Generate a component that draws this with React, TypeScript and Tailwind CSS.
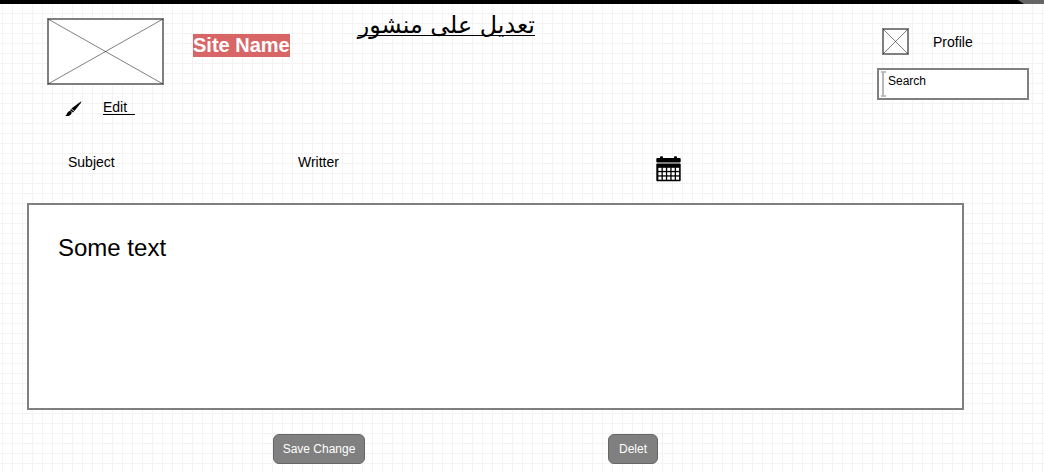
function CrossBox({ w, h }: { w: number; h: number }) {
  return (
    <svg width={w} height={h} viewBox={`0 0 ${w} ${h}`} className="block shrink-0">
      <rect x="1" y="1" width={w - 2} height={h - 2} fill="#fff" stroke="#808080" strokeWidth="2" />
      <path d={`M1 1L${w - 1} ${h - 1}M1 ${h - 1}L${w - 1} 1`} stroke="#000" strokeWidth="0.5" />
    </svg>
  );
}

function Brush() {
  return (
    <svg width="18" height="16" viewBox="0 0 18 16" className="block shrink-0">
      <path d="M16.4 0.3L15.6 2.2L9.4 10L6.4 7.6L13.8 1.9Z" />
      <path d="M6 8L9 10.4L8.1 11.5L5.1 9.4Z" />
      <path d="M4.4 10C6 9.9 7.4 11 6.4 12.7C5.4 14.3 3.2 15.4 0.2 14.9C2 14.1 2 10.7 4.4 10Z" />
    </svg>
  );
}

function Calendar() {
  const cols = [2.4, 6.8, 11.2, 15.6, 20];
  const rows = [11.8, 16.2, 20.6];
  return (
    <svg width="26" height="26" viewBox="0 0 26 26" className="block shrink-0">
      <rect x="4" y="0.3" width="3" height="4" rx="1" />
      <rect x="18" y="0.3" width="3" height="4" rx="1" />
      <rect x="0.3" y="2" width="24.4" height="4.4" rx="1" />
      <rect x="0.3" y="7.4" width="24.4" height="17.9" rx="1" />
      {rows.map((y) => cols.map((x) => <rect key={`${x}-${y}`} x={x} y={y} width="3.1" height="3.1" fill="#fff" />))}
    </svg>
  );
}

function Button({ children, className }: { children: string; className: string }) {
  return (
    <button className={`h-[30px] shrink-0 rounded-md border border-[#666] bg-[#808080] text-center text-xs text-white ${className}`}>
      {children}
    </button>
  );
}

export default function App() {
  return (
    <div className="h-[472px] w-[1044px] overflow-hidden bg-white bg-[linear-gradient(to_right,#f3f3f3_1px,transparent_1px),linear-gradient(to_bottom,#f3f3f3_1px,transparent_1px)] bg-[length:10px_10px] bg-[position:2px_3px] font-['Liberation_Sans',Arial,sans-serif] text-sm text-black">
      <div className="flex h-1 justify-end bg-black">
        <svg width="26" height="4" className="block">
          <path d="M0 0H26V4H6Z" fill="#666" />
        </svg>
      </div>
      <header className="flex h-[140px] items-start">
        <div className="ml-[47px] w-[117px] pt-[14px]">
          <CrossBox w={117} h={67} />
          <div className="mt-[12px] flex pl-[18px]">
            <div className="pt-[4px]"><Brush /></div>
            <span className="ml-[20px] whitespace-pre leading-5 underline underline-offset-2">{"Edit  "}</span>
          </div>
        </div>
        <h1 className="ml-[29px] mt-[30px] h-[23px] w-[97px] whitespace-nowrap bg-[#d96666] text-[20px] font-bold leading-[23px] text-white">Site Name</h1>
        <h2 dir="rtl" className="ml-[67px] mt-[4px] w-[178px] whitespace-nowrap font-['DejaVu_Sans',sans-serif] text-[23.8px] leading-[34px] underline decoration-1 underline-offset-2 [text-decoration-skip-ink:none]">تعديل على منشور</h2>
        <div className="ml-auto mr-[15px] w-[152px] pt-[24px]">
          <div className="flex items-center pl-[5px]">
            <CrossBox w={27} h={27} />
            <span className="ml-[24px]">Profile</span>
          </div>
          <div className="mt-[13px] flex h-8 border-2 border-[#808080] bg-white pl-[2px] text-xs">
            <svg width="5" height="26" viewBox="0 0 5 26" className="mt-[1px] block">
              <path d="M0 1H5M0 25H5" stroke="#aaa" strokeWidth="1.4" />
              <path d="M2 1V25" stroke="#b8b8b8" strokeWidth="2" />
            </svg>
            <span className="ml-[2px] mt-[3px] leading-4">Search</span>
          </div>
        </div>
      </header>
      <div className="flex h-[59px] items-start pl-[68px]">
        <span className="mt-[8px] w-[230px] leading-5">Subject</span>
        <span className="mt-[8px] w-[358px] leading-5">Writter</span>
        <div className="mt-[12px]"><Calendar /></div>
      </div>
      <main className="ml-[27px] h-[207px] w-[937px] border-2 border-[#808080] bg-white pl-[29px] pt-[29px] text-2xl leading-[28px]">
        Some text
      </main>
      <div className="flex pl-[273px] pt-[24px]">
        <Button className="w-[92px]">Save Change</Button>
        <Button className="ml-[243px] w-[50px]">Delet</Button>
      </div>
    </div>
  );
}
